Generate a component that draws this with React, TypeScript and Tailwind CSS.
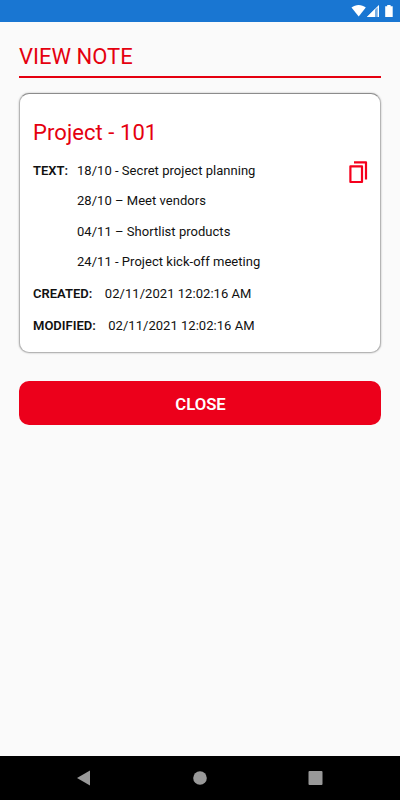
import React from 'react';

const lines = [
  '18/10 - Secret project planning',
  '28/10 – Meet vendors',
  '04/11 – Shortlist products',
  '24/11 - Project kick-off meeting',
];

const StatusBar: React.FC = () => (
  <header className="flex h-[22px] shrink-0 items-center justify-end bg-[#1976d2] pr-[6px]">
    <svg width="43" height="22" viewBox="0 0 43 22" fill="#fff">
      <path d="M0.5 7.6C4.6 4.2 10.7 4.2 14.8 7.6L7.7 16.5Z" />
      <path d="M28 5V17H16Z" fillOpacity=".4" />
      <path d="M24 9V17H16Z" />
      <path d="M28 5V17H26.7V7.2L17 17H16Z" />
      <path d="M34.2 6.2H36.2V5H39.6V6.2H41.7V17H34.2Z" />
    </svg>
  </header>
);

const NavBar: React.FC = () => (
  <nav className="flex h-11 shrink-0 items-center justify-between bg-black px-[77px]">
    <svg width="14" height="16" viewBox="0 0 14 16" fill="#999">
      <path d="M0 8L13 0.5V15.5Z" />
    </svg>
    <svg width="14" height="14" viewBox="0 0 14 14" fill="#999">
      <circle cx="7" cy="7" r="6.8" />
    </svg>
    <svg width="15" height="14" viewBox="0 0 15 14" fill="#999">
      <rect x="0.5" width="14" height="14" rx="1" />
    </svg>
  </nav>
);

export default function App() {
  return (
    <div className="flex h-[800px] w-[400px] flex-col bg-[#fafafa] font-[Roboto,sans-serif] text-[13px] text-[#111]">
      <StatusBar />
      <main className="flex-1 px-[19px] pt-[19px]">
        <h1 className="h-[37px] border-b-2 border-[#e5000f] text-[22px] leading-[32px] text-[#e5000f]">VIEW NOTE</h1>

        <section className="mt-[15px] h-[260px] rounded-[10px] border border-[#b5b5b5] border-t-[#8c8c8c] bg-white px-[13px] pt-[23px] shadow-[0_0_2px_rgba(0,0,0,0.3)]">
          <h2 className="text-[22px] leading-8 tracking-[0.07px] text-[#e5000f]">Project - 101</h2>
          <div className="mt-[7px] flex items-start">
            <span className="w-11 font-semibold leading-[30px]">TEXT:</span>
            <div className="flex-1 tracking-[0.03px]">
              {lines.map((line) => (
                <p key={line} className="leading-[30.4px]">{line}</p>
              ))}
            </div>
            <svg className="-mr-px mt-1" width="20" height="24" viewBox="0 0 20 24" fill="none" stroke="#f5001d" strokeWidth="2.2">
              <path d="M6 2.3H18V19.5M2.4 6.3H14V22H2.4Z" strokeLinejoin="round" />
            </svg>
          </div>
          <p className="flex gap-[12.5px] leading-8">
            <span className="font-semibold">CREATED:</span>
            <span className="tracking-[0.05px]">02/11/2021 12:02:16 AM</span>
          </p>
          <p className="flex gap-[12.5px] leading-8">
            <span className="font-semibold">MODIFIED:</span>
            <span className="tracking-[0.03px]">02/11/2021 12:02:16 AM</span>
          </p>
        </section>

        <button className="mt-7 h-11 w-full rounded-[10px] bg-[#ec001b] pl-px pt-[3px] text-[16.7px] font-semibold text-white">CLOSE</button>
      </main>
      <NavBar />
    </div>
  );
}
